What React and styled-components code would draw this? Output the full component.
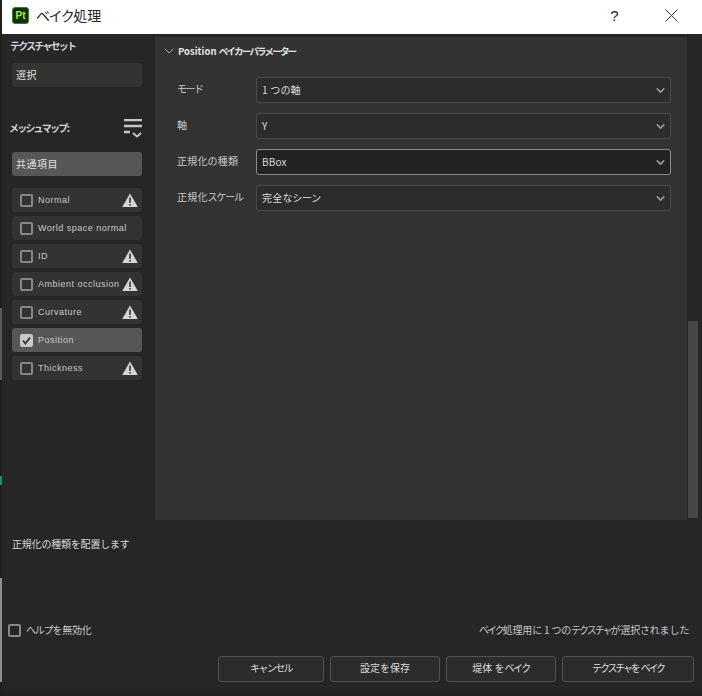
import React from "react";
import styled, { createGlobalStyle } from "styled-components";
import { ChevronDown } from "lucide-react";

const Global = createGlobalStyle`
  html, body { margin: 0; padding: 0; background: #1f1f1f; }
  * { box-sizing: border-box; }
`;
const FONT = `"Noto Sans CJK JP", "Liberation Sans", sans-serif`;

const Window = styled.div`
  width: 702px; height: 696px; position: relative; overflow: hidden;
  display: flex; flex-direction: column; background: #262626;
  padding-left: 2px; font-family: ${FONT}; color: #d8d8d8; font-size: 10px;
`;
const DesktopStrip = styled.div`
  position: absolute; left: 0; top: 0; width: 2px; height: 100%;
  background: linear-gradient(
    #1f1f1f 0 308px, #5a5a5a 308px 380px, #1f1f1f 380px 476px, #1f8a72 476px 485px,
    #1f1f1f 485px 578px, #8f8f8f 578px 682px, #1f1f1f 682px
  );
`;
const Kana = styled.span`
  letter-spacing: ${p => p.$s ?? -1.5}px;
`;
const TitleBar = styled.header`
  height: 34px; flex: none; background: #fff; color: #222; display: flex; align-items: center;
  padding: 0 2px 4px 10px;
`;
const Logo = styled.div`
  width: 17px; height: 17px; border-radius: 3px; background: #12300a; border: 1px solid #3f7f20;
  color: #a3f04a; font: bold 10px/15px "Liberation Sans", sans-serif; text-align: center; flex: none;
`;
const Title = styled.h1`
  margin: 0 0 0 7px; font-size: 14px; font-weight: 400; flex: 1;
`;
const TitleButton = styled.button`
  width: 57px; height: 30px; border: 0; background: none; padding: 0; color: #222; font: 400 15px "Liberation Sans", sans-serif;
  display: flex; align-items: center; justify-content: center;
`;
const Body = styled.div`
  height: 486px; flex: none; display: flex;
`;
const Sidebar = styled.aside`
  width: 153px; flex: none; padding: 5px 13px 0 8px; display: flex; flex-direction: column;
`;
const SideHeading = styled.div`
  font-size: 10px; font-weight: 700; color: #cdd3dc; line-height: 14px; letter-spacing: -1.8px; white-space: nowrap;
`;
const MeshHead = styled.div`
  display: flex; align-items: center; justify-content: space-between; height: 20px; margin: 31px 0 0 -1px;
`;
const SideBox = styled.div`
  height: 24px; border-radius: 3px; margin: ${p => p.$top}px 0 0 2px; display: flex; align-items: center; padding: 0 0 2px 4px;
  background: ${p => (p.$on ? "#575757" : "#333333")}; color: #e0e0e0; font-size: 10px; letter-spacing: 0.5px;
`;
const MapList = styled.div`
  display: flex; flex-direction: column; gap: 4px; margin: 12px 0 0 2px;
`;
const MapRow = styled.div`
  height: 24px; border-radius: 3px; display: flex; align-items: center; padding: 0 4px 0 8px; position: relative;
  background: ${p => (p.$on ? "#575757" : "#333333")}; color: #c8c8c8; font-size: 9px; letter-spacing: 0.5px;
  font-family: "Liberation Sans", sans-serif; white-space: nowrap;
`;
const Check = styled.span`
  width: 13px; height: 13px; border: 2px solid #888; border-radius: 2px; flex: none; margin-right: 5px;
  display: inline-flex; align-items: center; justify-content: center;
  background: ${p => (p.$on ? "#c8c8c8" : "transparent")};
  border-color: ${p => (p.$on ? "#c8c8c8" : "#888")};
`;
const Warn = styled.svg`
  position: absolute; right: 4px; top: 5px; width: 16px; height: 14px;
`;
const Main = styled.main`
  width: 532px; flex: none; background: #333333; margin-top: 3px; padding-top: 4px;
`;
const Section = styled.div`
  display: flex; align-items: center; height: 20px; padding-left: 6px; gap: 1px;
  font-size: 9.5px; font-weight: 700; color: #e2e2e2; white-space: nowrap;
`;
const Form = styled.div`
  display: grid; grid-template-columns: 79px 415px; row-gap: 10px; margin: 16px 0 0 22px; align-items: center;
`;
const Label = styled.label`
  font-size: 10px; color: #c8c8c8; letter-spacing: 0.2px; white-space: nowrap; position: relative; top: -2px;
`;
const Select = styled.div`
  height: 26px; border-radius: 3px; display: flex; align-items: center; justify-content: space-between;
  padding: 0 3px 0 5px; background: ${p => (p.$focus ? "#232323" : "#2c2c2c")};
  border: 1px solid ${p => (p.$focus ? "#8c8c8c" : "#4a4a4a")}; color: #dcdcdc; font-size: 10px; letter-spacing: 0.2px;
`;
const SelectValue = styled.span`
  margin-bottom: 2px;
`;
const Track = styled.div`
  width: 15px; flex: none; background: #262626; padding: 287px 4px 0 1px; height: 486px;
`;
const Thumb = styled.div`
  height: 197px; background: #464646;
`;
const Help = styled.p`
  margin: 0; height: 100px; padding: 16px 0 0 10px; font-size: 10px; color: #d8d8d8; letter-spacing: -0.2px;
`;
const StatusRow = styled.div`
  height: 20px; display: flex; align-items: center; justify-content: space-between; padding: 0 13px 0 6px; font-size: 10px;
  color: #c8c8c8; letter-spacing: -0.2px;
`;
const Toggle = styled.label`
  display: flex; align-items: center;
`;
const StatusText = styled.span`
  margin-bottom: 2px;
`;
const Footer = styled.footer`
  display: flex; justify-content: flex-end; gap: 6px; padding: 16px 8px 0 0;
`;
const Button = styled.button`
  height: 26px; width: ${p => p.$w}px; border: 1px solid #535353; border-radius: 3px; background: #2c2c2c;
  color: #dcdcdc; font: 400 10px ${FONT}; padding: 0 0 3px;
`;
const Bottom = styled.div`
  position: absolute; left: 2px; right: 0; bottom: 0; height: 7px; background: #212121;
`;

const WarnIcon = () => (
  <Warn viewBox="0 0 16 14">
    <path d="M8 0.5 L15.8 14 H0.2 Z" fill="#d6d6d6" />
    <rect x="7.2" y="4.5" width="1.6" height="5.5" fill="#333" />
    <rect x="7.2" y="11" width="1.6" height="1.6" fill="#333" />
  </Warn>
);

const maps = [
  ["Normal", true], ["World space normal", false], ["ID", true], ["Ambient occlusion", true],
  ["Curvature", true], ["Position", false, true], ["Thickness", true],
];
const fields = [
  [<Kana>モード</Kana>, "1 つの軸"],
  ["軸", "Y"],
  ["正規化の種類", "BBox", true],
  [<>正規化<Kana $s={-1.2}>スケール</Kana></>, <>完全な<Kana $s={-0.6}>シーン</Kana></>],
];

export default function App() {
  return (
    <Window>
      <Global />
      <DesktopStrip />
      <TitleBar>
        <Logo>Pt</Logo>
        <Title><Kana>ベイク</Kana>処理</Title>
        <TitleButton>?</TitleButton>
        <TitleButton>
          <svg width="13" height="13" viewBox="0 0 13 13"><path d="M0.5 0.5 L12.5 12.5 M12.5 0.5 L0.5 12.5" stroke="#333" fill="none" /></svg>
        </TitleButton>
      </TitleBar>
      <Body>
        <Sidebar>
          <SideHeading>テクスチャセット</SideHeading>
          <SideBox $top={10}>選択</SideBox>
          <MeshHead>
            <SideHeading>メッシュマップ :</SideHeading>
            <svg width="18" height="19" viewBox="0 0 18 19">
              <path d="M0 1H18M0 7H18M0 13H6" stroke="#c4c4c4" strokeWidth="2.6" fill="none" />
              <path d="M9 14L13 17.5L17 14" stroke="#c4c4c4" strokeWidth="2" fill="none" />
            </svg>
          </MeshHead>
          <SideBox $on $top={14}>共通項目</SideBox>
          <MapList>
            {maps.map(([name, warn, on]) => (
              <MapRow key={name} $on={on}>
                <Check $on={on}>
                  {on && <svg width="9" height="9" viewBox="0 0 9 9"><path d="M1 4.5L3.5 7.5L8 1.5" stroke="#333" strokeWidth="1.8" fill="none" /></svg>}
                </Check>
                {name}
                {warn && <WarnIcon />}
              </MapRow>
            ))}
          </MapList>
        </Sidebar>
        <Main>
          <Section>
            <ChevronDown size={16} strokeWidth={1.5} color="#aaa" />
            <span>Position <Kana $s={-1.8}>ベイカーパラメーター</Kana></span>
          </Section>
          <Form>
            {fields.map(([l, v, f], i) => (
              <React.Fragment key={i}>
                <Label>{l}</Label>
                <Select $focus={f}>
                  <SelectValue>{v}</SelectValue>
                  <ChevronDown size={13} strokeWidth={3} color="#9a9a9a" />
                </Select>
              </React.Fragment>
            ))}
          </Form>
        </Main>
        <Track><Thumb /></Track>
      </Body>
      <Help>正規化の種類を配置します</Help>
      <StatusRow>
        <Toggle><Check /><StatusText><Kana $s={-1.2}>ヘルプ</Kana>を無効化</StatusText></Toggle>
        <StatusText><Kana $s={-2}>ベイク</Kana>処理用に 1 つの<Kana $s={-2}>テクスチャ</Kana>が選択されました</StatusText>
      </StatusRow>
      <Footer>
        <Button $w={106}><Kana $s={-1.6}>キャンセル</Kana></Button>
        <Button $w={110}>設定を保存</Button>
        <Button $w={110}>堤体 を<Kana $s={-1.5}>ベイク</Kana></Button>
        <Button $w={132}><Kana $s={-2.2}>テクスチャ</Kana>を<Kana $s={-2.2}>ベイク</Kana></Button>
      </Footer>
      <Bottom />
    </Window>
  );
}
